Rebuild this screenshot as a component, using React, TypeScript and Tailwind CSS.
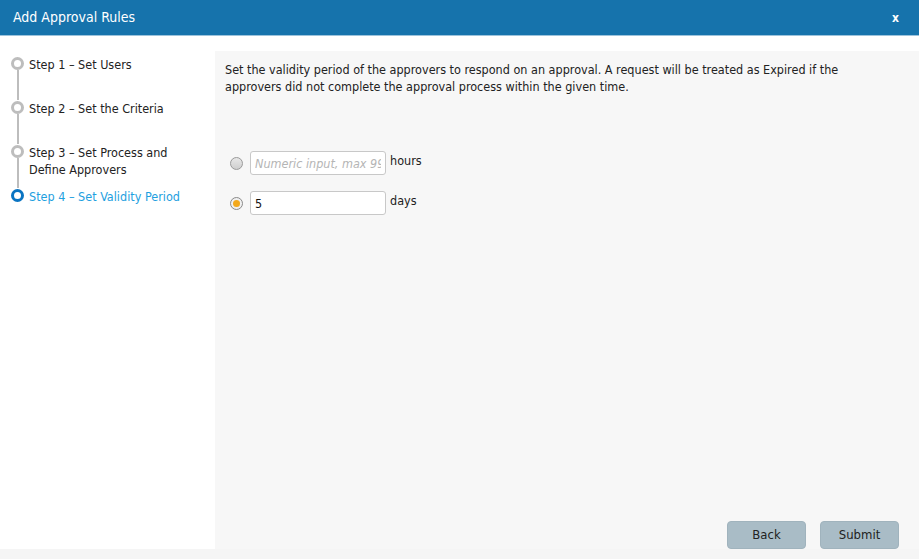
import { useState } from 'react';

const STEPS = [
  { id: 1, label: 'Step 1 – Set Users' },
  { id: 2, label: 'Step 2 – Set the Criteria' },
  { id: 3, label: 'Step 3 – Set Process and Define Approvers' },
  { id: 4, label: 'Step 4 – Set Validity Period' },
];

const font = { fontFamily: '"DejaVu Sans Condensed", "DejaVu Sans", sans-serif' };

function Radio({ checked }: { checked: boolean }) {
  return checked ? (
    <span className="w-[13px] h-[13px] rounded-full border border-[#8a8a8a] bg-[#f0f0f0] flex items-center justify-center shrink-0">
      <span className="w-[7px] h-[7px] rounded-full bg-[#f3a91c]" />
    </span>
  ) : (
    <span className="w-[13px] h-[13px] rounded-full border border-[#9a9a9a] bg-gradient-to-b from-[#e8e8e8] to-[#cfcfcf] shrink-0" />
  );
}

export default function App() {
  const [mode, setMode] = useState<'hours' | 'days'>('days');

  return (
    <div className="w-[919px] h-[559px] flex flex-col bg-[#f5f5f5] text-[#222] text-[12.5px]" style={font}>
      <div className="h-[36px] bg-[#1673ac] border-b border-[#9cc3dc] flex items-center justify-between pl-[13px] pr-[20px] shrink-0">
        <span className="text-white text-[14px]">Add Approval Rules</span>
        <span className="text-white font-bold text-[12px]">x</span>
      </div>

      <div className="flex h-[513px] bg-white">
        <div className="w-[215px] shrink-0 bg-white pt-[20px] pl-[6px]">
          {STEPS.map((s, i) => {
            const active = s.id === 4;
            return (
              <div key={s.id} className="flex">
                <div className="w-[23px] flex flex-col items-center shrink-0">
                  <span
                    className={
                      active
                        ? 'mt-[1px] w-[13px] h-[13px] rounded-full border-[3px] border-[#0a74c2] bg-white shrink-0'
                        : 'mt-[1px] w-[13px] h-[13px] rounded-full border-[3px] border-[#bdbdbd] bg-white shrink-0'
                    }
                  />
                  {i < STEPS.length - 1 && <span className="w-[2px] flex-1 bg-[#bdbdbd]" />}
                </div>
                <div className={s.id === 3 ? 'h-[44px] w-[160px] leading-[17px]' : 'h-[44px] leading-[17px]'}>
                  <span className={active ? 'text-[#1ea0e0]' : 'text-[#222]'}>{s.label}</span>
                </div>
              </div>
            );
          })}
        </div>

        <div className="flex-1 flex flex-col bg-white">
          <div className="h-[15px] bg-white" />
          <div className="flex-1 bg-[#f7f7f7] pl-[10px] pr-[20px] pt-[10px] flex flex-col">
            <p className="leading-[17px] w-[650px]">
              Set the validity period of the approvers to respond on an approval. A request will be treated as Expired if the
              approvers did not complete the approval process within the given time.
            </p>

            <div className="mt-[56px] flex flex-col gap-[16px] pl-[5px]">
              <label className="flex items-center gap-[7px]" onClick={() => setMode('hours')}>
                <Radio checked={mode === 'hours'} />
                <input
                  className="w-[136px] h-[24px] rounded-[3px] border border-[#c8c8c8] bg-white px-[4px] italic text-[12.5px] placeholder:text-[#b5b5b5] outline-none"
                  placeholder="Numeric input, max 99"
                  style={font}
                />
                <span className="-ml-[3px] -mt-[3px]">hours</span>
              </label>
              <label className="flex items-center gap-[7px]" onClick={() => setMode('days')}>
                <Radio checked={mode === 'days'} />
                <input
                  className="w-[136px] h-[24px] rounded-[3px] border border-[#c8c8c8] bg-white px-[4px] text-[12.5px] text-[#111] outline-none"
                  defaultValue="5"
                  style={font}
                />
                <span className="-ml-[3px] -mt-[3px]">days</span>
              </label>
            </div>

            <div className="mt-auto flex justify-end gap-[14px]">
              <button className="w-[79px] h-[28px] rounded-[4px] bg-[#a9bcc6] border border-[#a0b3bd] text-[#222] text-[13px]">Back</button>
              <button className="w-[79px] h-[28px] rounded-[4px] bg-[#a9bcc6] border border-[#a0b3bd] text-[#222] text-[13px]">Submit</button>
            </div>
          </div>
        </div>
      </div>
    </div>
  );
}
